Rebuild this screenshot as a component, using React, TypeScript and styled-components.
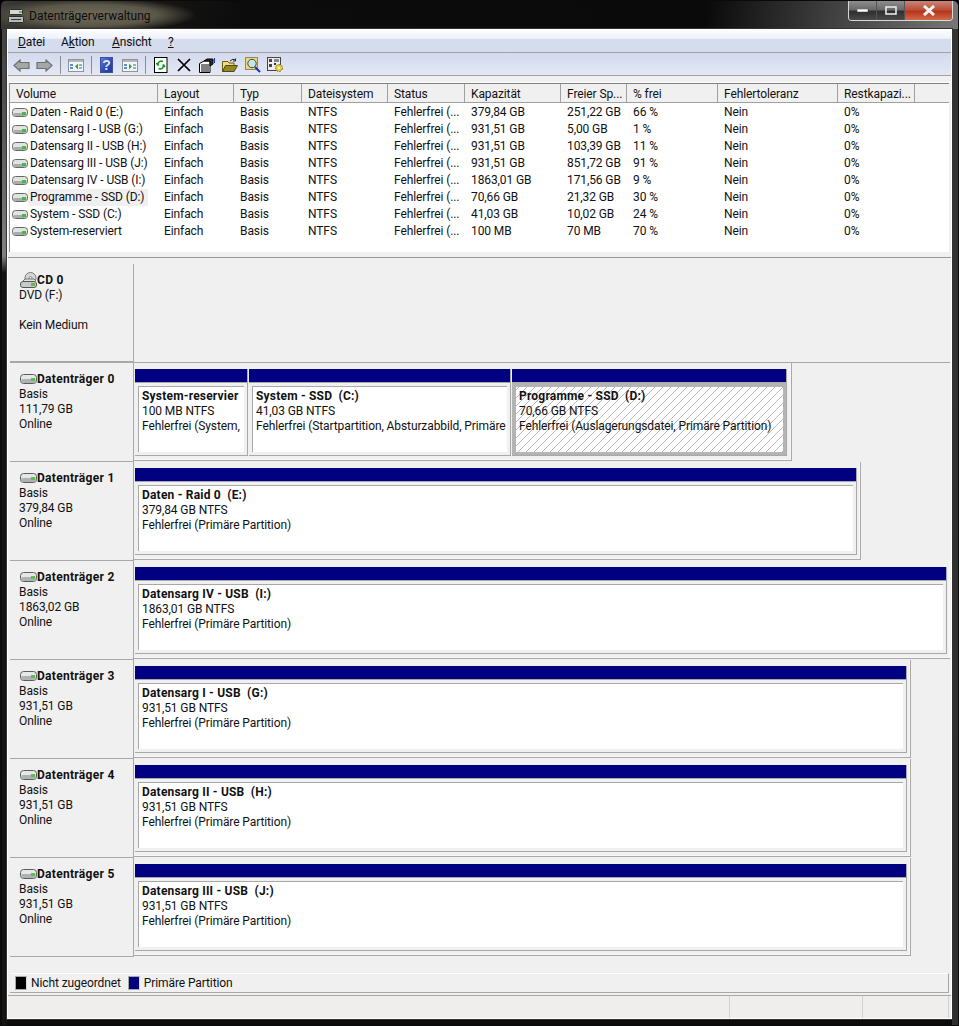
import React from "react";
import styled, { createGlobalStyle } from "styled-components";

const Global = createGlobalStyle`
  html, body { margin: 0; padding: 0; background: #000; }
  body { font-family: Roboto, "Noto Sans", sans-serif; font-size: 12px; color: #000; letter-spacing: -0.1px; }
  * { box-sizing: border-box; }
`;

const Frame = styled.div`
  width: 959px; height: 1026px; display: flex; flex-direction: column; overflow: hidden;
  background:
    linear-gradient(180deg, #3a3a3a 0, #555 120px, #808080 255px, #111 272px, #141414 100%) 1px 0 / 5px 100% no-repeat,
    linear-gradient(180deg, #333 0, #2e2e2e 100%) right 0 top 0 / 6px 100% no-repeat,
    #0c0c0c;
  border: 1px solid #0a0a0a; border-radius: 6px 6px 0 0;
`;
const TitleBar = styled.div`
  height: 28px; flex: none; display: flex; align-items: flex-start; padding-left: 7px;
  background:
    radial-gradient(ellipse 105px 17px at 90px 14px, #6e6a5c 0, #5c5849 62%, transparent 100%),
    linear-gradient(98deg, #3c3b36 0, #22211e 60px, #0c0c0c 240px, #0a0a0a 700px, #767676 950px);
`;
const AppIcon = styled.svg` width: 16px; height: 16px; margin-top: 7px; flex: none; `;
const Title = styled.div`
  margin: 6px 0 0 5px; line-height: 18px; color: #0c0c0c; flex: 1; font-size: 12px; letter-spacing: 0;
`;
const WinButtons = styled.div`
  display: flex; height: 20px; margin-right: 5px; border: 1px solid #d8d8d8; border-top: 0; border-radius: 0 0 4px 4px; overflow: hidden; flex: none;
`;
const WinButton = styled.div<{ $w: number; $close?: boolean }>`
  width: ${(p) => p.$w}px; display: flex; align-items: center; justify-content: center;
  border-right: ${(p) => (p.$close ? "0" : "1px solid #555")};
  background: ${(p) => p.$close ? "linear-gradient(180deg, #c98476 0, #b9513c 45%, #b8351a 55%, #cf6a4c 100%)" : "linear-gradient(180deg, #8d8d8d 0, #6a6a6a 45%, #2f2f2f 55%, #4b4b4b 100%)"};
`;
const Client = styled.div`
  margin: 0 6px 6px; flex: 1; min-height: 0; display: flex; flex-direction: column; background: #f0f0f0;
  border: 1px solid #fff; outline: 1px solid #333;
`;
const MenuBar = styled.div`
  height: 23px; flex: none; display: flex; padding: 2px 0 0 10px; align-items: center;
  background: linear-gradient(180deg, #fdfdfe 0, #eef2fa 38%, #d4dcee 42%, #d4dcee 100%);
  border-bottom: 1px solid #a3a3a3;
`;
const MenuItem = styled.span<{ $w: number }>` width: ${(p) => p.$w}px; color: #111; `;
const Toolbar = styled.div`
  height: 23px; flex: none; display: flex; align-items: center; padding: 2px 0 0 2px;
  background: linear-gradient(180deg, #d3daed 0, #e4e8f4 100%);
  border-bottom: 1px solid #a3a3a3;
`;
const ToolButton = styled.div` width: 23px; height: 20px; display: flex; align-items: center; justify-content: center; flex: none; `;
const ToolSep = styled.div` width: 8px; height: 18px; flex: none; display: flex; justify-content: center; &::before { content: ""; width: 1px; background: #8c8c8c; } `;
const Strip = styled.div` height: 7px; flex: none; background: #f0f0f0; border-bottom: 1px solid #fff; `;
const ListPane = styled.div`
  height: 169px; flex: none; margin: 0 2px 0 1px; background: #fff; border-top: 1px solid #808080; border-left: 1px solid #909090;
  display: flex; flex-direction: column;
`;
const ColRow = styled.div` display: flex; height: 17px; flex: none; align-items: center; `;
const HeaderRow = styled.div` display: flex; height: 20px; flex: none; background: #f0f0f0; border-bottom: 1px solid #fff; `;
const HeaderCell = styled.div<{ $w: number }>`
  width: ${(p) => p.$w}px; flex: none; padding: 1px 0 0 6px; line-height: 18px; white-space: nowrap; overflow: hidden;
  border-right: 1px solid #a0a0a0; border-bottom: 1px solid #a0a0a0; color: #111;
`;
const HeaderRest = styled.div` flex: 1; border-bottom: 1px solid #a0a0a0; `;
const Cell = styled.div<{ $w: number }>` width: ${(p) => p.$w}px; flex: none; padding-left: 6px; white-space: nowrap; overflow: hidden; color: #111; line-height: 17px; `;
const VolumeCell = styled.div<{ $w: number }>` width: ${(p) => p.$w}px; flex: none; padding-left: 2px; display: flex; align-items: center; white-space: nowrap; color: #111; line-height: 17px; `;
const VolumeName = styled.span<{ $focus?: boolean }>` background: ${(p) => (p.$focus ? "#f0f0f0" : "transparent")}; padding: 0 4px 0 2px; `;
const Splitter = styled.div` height: 6px; flex: none; background: #f0f0f0; border-bottom: 1px solid #9a9a9a; `;
const DiskPane = styled.div` height: 708px; flex: none; margin: 0 1px 0 2px; padding-top: 6px; background: #f0f0f0; overflow: hidden; `;
const DiskRow = styled.div<{ $line?: boolean }>`
  height: 99px; display: flex;
  ${(p) => (p.$line ? "border-bottom: 1px solid #a8a8a8;" : "")}
`;
const DiskLabel = styled.div`
  width: 124px; flex: none; padding: 8px 0 0 9px; border-right: 1px solid #a8a8a8; border-bottom: 1px solid #a8a8a8; line-height: 15px; color: #111;
`;
const DiskHead = styled.div` display: flex; align-items: center; height: 16px; margin-left: 1px; font-weight: 700; font-size: 12px; letter-spacing: 0.3px; `;
const Empty = styled.div` flex: 1; `;
const Tracks = styled.div<{ $w: number }>`
  width: ${(p) => p.$w}px; flex: none; height: 98px; padding: 6px 4px 3px 1px; display: flex; gap: 1px;
  border-right: 1px solid #a8a8a8; border-bottom: 1px solid #a8a8a8; box-shadow: inset -1px -1px 0 #f8f8f8;
`;
const Partition = styled.div<{ $w: number }>`
  width: ${(p) => p.$w}px; flex: none; height: 87px; display: flex; flex-direction: column;
`;
const PartBar = styled.div` height: 13px; flex: none; background: #000080; border-right: 1px solid #a8a8a8; `;
const PartBody = styled.div<{ $sel?: boolean }>`
  flex: 1; min-height: 0; padding: 3px;
  border-top: 1px solid #a8a8a8; border-right: 1px solid #a8a8a8; border-bottom: 1px solid #a8a8a8;
  background: ${(p) => (p.$sel ? "#b4b4b4" : "#f0f0f0")};
`;
const PartInner = styled.div<{ $sel?: boolean }>`
  height: 100%; padding: 2px 0 0 3px; overflow: hidden; white-space: nowrap; line-height: 15px; color: #111;
  border-left: 1px solid ${(p) => (p.$sel ? "#b4b4b4" : "#a8a8a8")}; border-top: 1px solid ${(p) => (p.$sel ? "#b4b4b4" : "#a8a8a8")};
  background-color: #fff;
  ${(p) => p.$sel ? "background-image: repeating-linear-gradient(-45deg, #b8b8b8 0, #b8b8b8 1px, transparent 1px, transparent 5.66px);" : ""}
`;
const PartName = styled.div` font-weight: 700; white-space: pre; letter-spacing: 0.2px; `;
const Legend = styled.div`
  height: 20px; flex: none; margin: 7px 2px 0 2px; display: flex; align-items: center; padding-left: 5px; gap: 4px;
  border-top: 1px solid #fff; border-bottom: 1px solid #a8a8a8; border-right: 1px solid #a8a8a8;
  color: #111;
`;
const Swatch = styled.div<{ $c: string }>` width: 12px; height: 14px; background: ${(p) => p.$c}; border: 1px solid #a8a8a8; border-right-color: #ddd; flex: none; `;
const LegendText = styled.span` margin-right: 3px; `;
const StatusBar = styled.div`
  flex: 1; margin-top: 2px; display: flex; background: #f0eded; border-top: 1px solid #a8a8a8;
`;
const StatusCell = styled.div<{ $w: number }>` width: ${(p) => p.$w}px; flex: none; border-right: 1px solid #d2d2d2; `;

const Drive = () => (
  <svg width="16" height="9" viewBox="0 0 16 9">
    <rect x="0.5" y="0.5" width="15" height="8" rx="3" fill="#e2e4e2" stroke="#66696a" />
    <rect x="1" y="5" width="14" height="3" rx="1.5" fill="#a9adab" />
    <rect x="10" y="4" width="4" height="3" fill="#4ab840" />
  </svg>
);
const DiskDrive = () => (
  <svg width="17" height="10" viewBox="0 0 17 10">
    <rect x="0.5" y="0.5" width="16" height="9" rx="3" fill="#e6e7e6" stroke="#5a5d5e" />
    <rect x="1" y="5" width="15" height="4" rx="2" fill="#aeb2b0" />
    <rect x="11" y="4" width="4" height="3" fill="#5bbf50" />
  </svg>
);
const CdDrive = () => (
  <svg width="17" height="16" viewBox="0 0 17 16">
    <circle cx="10.5" cy="6" r="5.5" fill="#d4d8d8" stroke="#777" />
    <circle cx="10.5" cy="6" r="1.5" fill="#fff" stroke="#888" />
    <path d="M3 9 L5 7 H14 L16 9" fill="#e4e4e4" stroke="#777" />
    <rect x="0.5" y="9.5" width="16" height="6" rx="2.5" fill="#c8ccc9" stroke="#555" />
    <rect x="11" y="11" width="4" height="3" fill="#5bbf50" />
  </svg>
);
const Back = () => (
  <svg width="17" height="13" viewBox="0 0 17 13">
    <path d="M1 6.5 L7 1 V3.5 H16 V9.5 H7 V12 Z" fill="#a6a8a8" stroke="#6e7070" strokeWidth="1.2" />
  </svg>
);
const Forward = () => (
  <svg width="17" height="13" viewBox="0 0 17 13">
    <path d="M16 6.5 L10 1 V3.5 H1 V9.5 H10 V12 Z" fill="#a6a8a8" stroke="#6e7070" strokeWidth="1.2" />
  </svg>
);
const PaneIcon = ({ right }: { right?: boolean }) => (
  <svg width="16" height="13" viewBox="0 0 16 13">
    <rect x="0.5" y="0.5" width="15" height="12" fill="#f4f5f6" stroke="#8f9498" />
    <rect x="1" y="1" width="14" height="2" fill="#b4b8bc" />
    <rect x="2" y="5" width="3" height="2" fill="#5f8fc8" />
    <rect x="2" y="8" width="3" height="2" fill="#5f8fc8" />
    <rect x="11" y="5" width="3" height="2" fill="#8fb0d8" />
    <rect x="11" y="8" width="3" height="2" fill="#8fb0d8" />
    {right ? <path d="M7 4.5 L10 7.5 L7 10.5 Z" fill="#2fa52f" /> : <path d="M10 4.5 L7 7.5 L10 10.5 Z" fill="#2fa52f" />}
  </svg>
);
const Help = () => (
  <svg width="13" height="16" viewBox="0 0 13 16">
    <defs>
      <linearGradient id="helpFill" x1="0" y1="0" x2="1" y2="1">
        <stop offset="0" stopColor="#5f7fe0" />
        <stop offset="0.6" stopColor="#2c47ad" />
        <stop offset="1" stopColor="#24399a" />
      </linearGradient>
    </defs>
    <rect x="0.5" y="0.5" width="12" height="15" fill="url(#helpFill)" stroke="#3a50a8" />
    <text x="6.5" y="13" textAnchor="middle" fontFamily="Liberation Sans" fontWeight="700" fontSize="14" fill="#dfe6f8">?</text>
  </svg>
);
const Refresh = () => (
  <svg width="14" height="16" viewBox="0 0 14 16">
    <rect x="0.5" y="0.5" width="12.5" height="15" fill="#fff" stroke="#000" />
    <path d="M9 4.5 Q5 3 4 7 M5 7.5 L3.8 8 L2.5 6 M4.5 11.5 Q8.5 13 9.5 9 M8.5 8.5 L9.7 8 L11 10" fill="none" stroke="#139a1c" strokeWidth="1.6" />
  </svg>
);
const Cross = () => (
  <svg width="14" height="14" viewBox="0 0 14 14">
    <path d="M1 1 L13 13 M13 1 L1 13" stroke="#000" strokeWidth="1.7" />
  </svg>
);
const Props = () => (
  <svg width="16" height="15" viewBox="0 0 16 15">
    <path d="M0.5 5.5 L5 3 H11 V14.5 H0.5 Z" fill="#fff" stroke="#000" />
    <path d="M2 7 H10 M2 9 H10 M2 11 H10 M2 13 H10" stroke="#000" />
    <path d="M5 3 L8 1 H14 V6 L11 8 V3 Z" fill="#333" stroke="#000" />
    <path d="M15.5 0 V5" stroke="#2038c0" />
  </svg>
);
const Open = () => (
  <svg width="16" height="14" viewBox="0 0 16 14">
    <path d="M0.5 3.5 H6 L7 5 H12 V13.5 H0.5 Z" fill="#f2dc7e" stroke="#6a5a10" />
    <path d="M0.5 13.5 L3.5 7.5 H15.5 L12 13.5 Z" fill="#8f8a25" stroke="#4f4a10" />
    <path d="M8 3 Q11 0 13.5 2 M13.5 0.5 V3 H11" fill="none" stroke="#222" />
  </svg>
);
const Search = () => (
  <svg width="16" height="16" viewBox="0 0 16 16">
    <rect x="0.5" y="0.5" width="12" height="12" fill="#f0d878" stroke="#8a8a6a" />
    <circle cx="7" cy="6.5" r="4.2" fill="#bfe8e8" stroke="#444" />
    <path d="M10 10 L15 15" stroke="#1f2fc8" strokeWidth="2" />
  </svg>
);
const Settings = () => (
  <svg width="17" height="16" viewBox="0 0 17 16">
    <rect x="0.5" y="0.5" width="13" height="13" fill="#eee" stroke="#444" />
    <rect x="2" y="2" width="3" height="3" fill="#444" />
    <rect x="7" y="2" width="5" height="3" fill="#888" />
    <rect x="2" y="7" width="3" height="3" fill="#444" />
    <rect x="7" y="6" width="2" height="2" fill="#333" />
    <circle cx="12" cy="11" r="3.4" fill="#e8d040" stroke="#7a6a10" strokeDasharray="2 1" />
    <circle cx="12" cy="11" r="1" fill="#fff" />
  </svg>
);

const colW = [148, 76, 68, 86, 77, 96, 66, 91, 120, 77];
const headers = ["Volume", "Layout", "Typ", "Dateisystem", "Status", "Kapazität", "Freier Sp...", "% frei", "Fehlertoleranz", "Restkapazi..."];
const rows: string[][] = [
  ["Daten - Raid 0 (E:)", "379,84 GB", "251,22 GB", "66 %"],
  ["Datensarg I - USB (G:)", "931,51 GB", "5,00 GB", "1 %"],
  ["Datensarg II - USB (H:)", "931,51 GB", "103,39 GB", "11 %"],
  ["Datensarg III - USB (J:)", "931,51 GB", "851,72 GB", "91 %"],
  ["Datensarg IV - USB (I:)", "1863,01 GB", "171,56 GB", "9 %"],
  ["Programme - SSD (D:)", "70,66 GB", "21,32 GB", "30 %"],
  ["System - SSD (C:)", "41,03 GB", "10,02 GB", "24 %"],
  ["System-reserviert", "100 MB", "70 MB", "70 %"],
];

const disks = [
  { name: "Datenträger 0", size: "111,79 GB", w: 658, parts: [
    { w: 113, n: "System-reservier", s: "100 MB NTFS", h: "Fehlerfrei (System," },
    { w: 262, n: "System - SSD  (C:)", s: "41,03 GB NTFS", h: "Fehlerfrei (Startpartition, Absturzabbild, Primäre" },
    { w: 275, n: "Programme - SSD  (D:)", s: "70,66 GB NTFS", h: "Fehlerfrei (Auslagerungsdatei, Primäre Partition)", sel: true },
  ] },
  { name: "Datenträger 1", size: "379,84 GB", w: 727, parts: [{ w: 722, n: "Daten - Raid 0  (E:)", s: "379,84 GB NTFS", h: "Fehlerfrei (Primäre Partition)" }] },
  { name: "Datenträger 2", size: "1863,02 GB", w: 817, parts: [{ w: 812, n: "Datensarg IV - USB  (I:)", s: "1863,01 GB NTFS", h: "Fehlerfrei (Primäre Partition)" }] },
  { name: "Datenträger 3", size: "931,51 GB", w: 777, parts: [{ w: 772, n: "Datensarg I - USB  (G:)", s: "931,51 GB NTFS", h: "Fehlerfrei (Primäre Partition)" }] },
  { name: "Datenträger 4", size: "931,51 GB", w: 777, parts: [{ w: 772, n: "Datensarg II - USB  (H:)", s: "931,51 GB NTFS", h: "Fehlerfrei (Primäre Partition)" }] },
  { name: "Datenträger 5", size: "931,51 GB", w: 777, parts: [{ w: 772, n: "Datensarg III - USB  (J:)", s: "931,51 GB NTFS", h: "Fehlerfrei (Primäre Partition)" }] },
];

export default function App() {
  return (
    <>
      <Global />
      <Frame>
        <TitleBar>
          <AppIcon viewBox="0 0 16 16">
            <rect x="1.5" y="1.5" width="13" height="5" rx="1" fill="#d4d8d4" stroke="#2c2c2c" />
            <rect x="0.5" y="8.5" width="15" height="6" rx="1" fill="#b8bcb8" stroke="#2c2c2c" />
            <path d="M3 11.5 H13" stroke="#333" />
            <rect x="11" y="3" width="3" height="2" fill="#4fc04f" />
          </AppIcon>
          <Title>Datenträgerverwaltung</Title>
          <WinButtons>
            <WinButton $w={28}>
              <svg width="12" height="4" viewBox="0 0 12 4"><rect width="11" height="3" fill="#fff" stroke="#333" strokeWidth="0.5" /></svg>
            </WinButton>
            <WinButton $w={28}>
              <svg width="12" height="9" viewBox="0 0 12 9"><rect x="1" y="1" width="10" height="7" fill="none" stroke="#e8e8e8" strokeWidth="1.6" /></svg>
            </WinButton>
            <WinButton $w={47} $close>
              <svg width="14" height="11" viewBox="0 0 14 11"><path d="M2 1 L12 10 M12 1 L2 10" stroke="#f4f4f4" strokeWidth="3" /></svg>
            </WinButton>
          </WinButtons>
        </TitleBar>
        <Client>
          <MenuBar>
            <MenuItem $w={43}><u>D</u>atei</MenuItem>
            <MenuItem $w={51}>A<u>k</u>tion</MenuItem>
            <MenuItem $w={56}><u>A</u>nsicht</MenuItem>
            <MenuItem $w={12}><u>?</u></MenuItem>
          </MenuBar>
          <Toolbar>
            <ToolButton><Back /></ToolButton>
            <ToolButton><Forward /></ToolButton>
            <ToolSep />
            <ToolButton><PaneIcon /></ToolButton>
            <ToolSep />
            <ToolButton><Help /></ToolButton>
            <ToolButton><PaneIcon right /></ToolButton>
            <ToolSep />
            <ToolButton><Refresh /></ToolButton>
            <ToolButton><Cross /></ToolButton>
            <ToolButton><Props /></ToolButton>
            <ToolButton><Open /></ToolButton>
            <ToolButton><Search /></ToolButton>
            <ToolButton><Settings /></ToolButton>
          </Toolbar>
          <Strip />
          <ListPane>
            <HeaderRow>
              {headers.map((h, i) => (
                <HeaderCell key={h} $w={colW[i]}>{h}</HeaderCell>
              ))}
              <HeaderRest />
            </HeaderRow>
            {rows.map((r) => (
              <ColRow key={r[0]}>
                <VolumeCell $w={colW[0]}><Drive /><VolumeName $focus={r[0].startsWith("Programme")}>{r[0]}</VolumeName></VolumeCell>
                <Cell $w={colW[1]}>Einfach</Cell>
                <Cell $w={colW[2]}>Basis</Cell>
                <Cell $w={colW[3]}>NTFS</Cell>
                <Cell $w={colW[4]}>Fehlerfrei (...</Cell>
                <Cell $w={colW[5]}>{r[1]}</Cell>
                <Cell $w={colW[6]}>{r[2]}</Cell>
                <Cell $w={colW[7]}>{r[3]}</Cell>
                <Cell $w={colW[8]}>Nein</Cell>
                <Cell $w={colW[9]}>0%</Cell>
              </ColRow>
            ))}
          </ListPane>
          <Splitter />
          <DiskPane>
            <DiskRow $line>
              <DiskLabel>
                <DiskHead><CdDrive />CD 0</DiskHead>
                <div>DVD (F:)</div>
                <div>&nbsp;</div>
                <div>Kein Medium</div>
              </DiskLabel>
              <Empty />
            </DiskRow>
            {disks.map((d) => (
              <DiskRow key={d.name}>
                <DiskLabel>
                  <DiskHead><DiskDrive />{d.name}</DiskHead>
                  <div>Basis</div>
                  <div>{d.size}</div>
                  <div>Online</div>
                </DiskLabel>
                <Tracks $w={d.w}>
                  {d.parts.map((p) => (
                    <Partition key={p.n} $w={p.w}>
                      <PartBar />
                      <PartBody $sel={p.sel}>
                        <PartInner $sel={p.sel}>
                          <PartName>{p.n}</PartName>
                          <div>{p.s}</div>
                          <div>{p.h}</div>
                        </PartInner>
                      </PartBody>
                    </Partition>
                  ))}
                </Tracks>
              </DiskRow>
            ))}
          </DiskPane>
          <Legend>
            <Swatch $c="#000" />
            <LegendText>Nicht zugeordnet</LegendText>
            <Swatch $c="#000080" />
            <LegendText>Primäre Partition</LegendText>
          </Legend>
          <StatusBar>
            <StatusCell $w={722} />
            <StatusCell $w={133} />
            <StatusCell $w={86} />
          </StatusBar>
        </Client>
      </Frame>
    </>
  );
}
